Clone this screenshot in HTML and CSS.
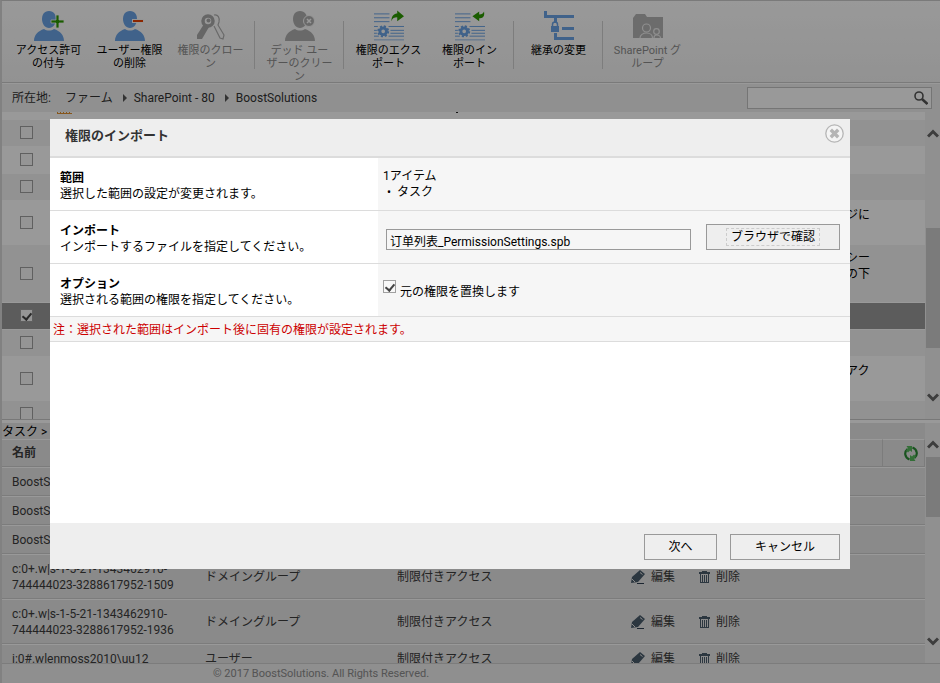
FILE: index.html
```html
<!DOCTYPE html>
<html lang="ja">
<head>
<meta charset="utf-8">
<title>権限のインポート</title>
<link rel="stylesheet" href="styles.css">
</head>
<body>
<svg class="defs" aria-hidden="true">
  <symbol id="user" viewBox="0 0 30 30"><path d="M15 0c5 0 7 4 7 8 0 5-3 9-7 9s-7-4-7-9c0-4 2-8 7-8z"/><path d="M0 30c0-6 4-10 10-12 3 2 7 2 10 0 6 2 10 6 10 12z"/></symbol>
  <symbol id="doc" viewBox="0 0 31 30"><path d="M0 2.500h16M0 6.500h16M0 10.500h16M0 15.500h4M0 19.500h3M0 22.500h3M0 25.500h5M15 15.500h16M17 19.500h14M17 22.500h14M15 25.500h16M0 29.500h31" fill="none" stroke="#6ba4e6"/><circle cx="9.500" cy="20.500" r="3.400" fill="none" stroke="#6ba4e6" stroke-width="3"/><circle cx="9.500" cy="20.500" r="5.200" fill="none" stroke="#6ba4e6" stroke-width="2" stroke-dasharray="2.200 1.884"/></symbol>
  <symbol id="up" viewBox="0 0 12 10"><path d="M1 8.500l5-5 5 5" fill="none" stroke="#666" stroke-width="3"/></symbol>
  <symbol id="edit" viewBox="0 0 14 14"><path d="M9 0l5 4-7 8-7 1 1-6z"/><path d="M1 9l3 3M9 2.500l2.500 2" stroke="#e6e6e6" fill="none"/><path d="M6 13.500h7" stroke="#2e3f50"/></symbol>
  <symbol id="trash" viewBox="0 0 11 12"><path d="M0 1h3V0h5v1h3v2H0zM1 3h1v8h1V4h1v7h1V4h1v7h1V4h1v7h1V3h1v9H1z"/></symbol>
</svg>

<div class="app">
  <nav class="toolbar">
    <button class="tool"><svg viewBox="0 0 30 30"><use href="#user" fill="#6ba4e6"/><path d="M22 4h3v5h5v3h-5v5h-3v-5h-5V9h5z" fill="#2c9a00" stroke="#f9f9f9" stroke-width=".800"/></svg>アクセス許可<br>の付与</button>
    <button class="tool"><svg viewBox="0 0 30 30"><use href="#user" fill="#6ba4e6"/><path d="M17 8h12v4H17z" fill="#f9f9f9"/><path d="M18 9h10v2H18z" fill="#e84000"/></svg>ユーザー権限<br>の削除</button>
    <button class="tool" disabled><svg viewBox="0 0 30 30"><path d="M18 4c4-1 6 3 5 7l-1 3 6 10-1 4-3-1-6-12" fill="none" stroke="#b0b0b0" stroke-width="1.200"/><path d="M8 13l5 3-7 12H1v-4z" fill="#aaa"/><circle cx="12" cy="10" r="5" fill="none" stroke="#aaa" stroke-width="3.500"/><circle cx="12.500" cy="9.500" r="2" fill="#aaa"/></svg>権限のクロー<br>ン</button>
    <span class="sep"></span>
    <button class="tool" disabled><svg viewBox="0 0 30 30"><use href="#user" fill="#b0b0b0"/><circle cx="24" cy="10" r="5.500" fill="#b0b0b0" stroke="#f9f9f9"/><path d="M22 8l4 4m0-4l-4 4" stroke="#fff" stroke-width="1.500"/></svg>デッド ユー<br>ザーのクリー<br>ン</button>
    <span class="sep"></span>
    <button class="tool"><svg viewBox="0 0 31 30"><use href="#doc"/><path d="M18 10c0-6 3-8 6-8V-1l7 6-7 5V6c-3 0-5 1-6 4z" fill="#2c9a00"/></svg>権限のエクス<br>ポート</button>
    <button class="tool"><svg viewBox="0 0 31 30"><use href="#doc"/><path d="M30 0c1 6-2 7-5 7v3l-7-5 7-5v3c3 0 4-1 5-3z" fill="#2c9a00"/></svg>権限のイン<br>ポート</button>
    <span class="sep"></span>
    <button class="tool"><svg viewBox="0 0 30 30"><path d="M1.500 0v5.500H30M11.500 7v5M18 17.500h12M11.500 22v5.500H30" fill="none" stroke="#6ba4e6" stroke-width="3"/><path d="M7 15h8v6H7z" fill="#6ba4e6"/><path d="M8.500 15v-1.500a2.500 2.500 0 0 1 5 0V15" fill="none" stroke="#6ba4e6" stroke-width="1.500"/></svg>継承の変更</button>
    <span class="sep"></span>
    <button class="tool" disabled><svg viewBox="0 0 30 30"><path d="M0 7l3-4h9l2 3h16v21H0z" fill="#b5b5b5"/><g fill="none" stroke="#eee" stroke-width="1.200"><circle cx="13.500" cy="17" r="4"/><path d="M7 27c0-3 3-5 6.500-5s6 2 6 5"/><circle cx="23.500" cy="20.500" r="2.800"/><path d="M21 27c0-2 1-3 2.500-3s4 1 4 3"/></g></svg>SharePoint グ<br>ループ</button>
  </nav>

  <div class="location">
    <span class="where">所在地:</span>
    <a href="#">ファーム</a>
    <svg class="tri" viewBox="0 0 4 8"><path d="M0 0l4 4-4 4z"/></svg>
    <a href="#">SharePoint - 80</a>
    <svg class="tri" viewBox="0 0 4 8"><path d="M0 0l4 4-4 4z"/></svg>
    <a href="#">BoostSolutions</a>
    <label class="search"><input type="search" aria-label="検索"><svg viewBox="0 0 14 14"><circle cx="5" cy="5" r="4" fill="none" stroke="#555" stroke-width="1.600"/><path d="M8 8l5.500 5" stroke="#555" stroke-width="2.600"/></svg></label>
  </div>

  <section class="pane list">
    <div class="view">
      <table class="items">
        <tr class="cut"><td></td><td><svg class="rest" viewBox="0 0 420 2"><path d="M0 1.500h15" stroke="#e09030"/><path d="M0 .500h15" stroke="#e09030" stroke-dasharray="1 2"/><path d="M399 0h2v1h-2z" fill="#222"/></svg></td><td></td></tr>
        <tr class="alt"><td><input type="checkbox" aria-label="項目 1"></td><td></td><td></td></tr>
        <tr><td><input type="checkbox" aria-label="項目 2"></td><td></td><td></td></tr>
        <tr class="alt"><td><input type="checkbox" aria-label="項目 3"></td><td></td><td></td></tr>
        <tr class="mid"><td><input type="checkbox" aria-label="項目 4"></td><td></td><td>ジに<br>&nbsp;</td></tr>
        <tr class="alt tall"><td><input type="checkbox" aria-label="項目 5"></td><td></td><td>シー<br>の下<br>&nbsp;</td></tr>
        <tr class="on"><td><input type="checkbox" aria-label="タスク" checked></td><td></td><td></td></tr>
        <tr class="alt"><td><input type="checkbox" aria-label="項目 7"></td><td></td><td></td></tr>
        <tr class="mid"><td><input type="checkbox" aria-label="項目 8"></td><td></td><td>アク<br>&nbsp;</td></tr>
        <tr class="alt"><td><input type="checkbox" aria-label="項目 9"></td><td></td><td></td></tr>
      </table>
    </div>
    <div class="bar"><svg><use href="#up"/></svg><div class="track"><i class="thumb one"></i></div><svg class="down"><use href="#up"/></svg></div>
  </section>

  <section class="pane rights">
    <div class="view">
      <p class="path">タスク &gt;</p>
      <table class="grid">
        <thead><tr><th class="c1">名前</th><th class="c2"></th><th class="c3"></th><th class="c4"></th><th class="c5"><svg viewBox="0 0 14 15" aria-label="更新"><path d="M5.500 13.500C.5 11.500 0 6 3.500 3M8.500 1.500C13.500 3.500 14 9 10.500 12" fill="none" stroke="#2a8a34" stroke-width="2.200"/><path d="M2.500 0H8v6L6 4.500 4 6.500 2 4.500 3.800 2zM11.500 15H6V9l2 1.500 2-2 2 2-1.800 2.500z" fill="#55b85c"/></svg></th></tr></thead>
        <tbody>
          <tr><td>BoostSolutions</td><td></td><td></td><td></td><td></td></tr>
          <tr><td>BoostSolutions</td><td></td><td></td><td></td><td></td></tr>
          <tr><td>BoostSolutions</td><td></td><td></td><td></td><td></td></tr>
          <tr class="two"><td>c:0+.w|s-1-5-21-1343462910-<br>744444023-3288617952-1509</td><td>ドメイングループ</td><td>制限付きアクセス</td><td><div class="acts"><a href="#"><svg><use href="#edit"/></svg>編集</a><a href="#"><svg class="bin"><use href="#trash"/></svg>削除</a></div></td><td></td></tr>
          <tr class="two"><td>c:0+.w|s-1-5-21-1343462910-<br>744444023-3288617952-1936</td><td>ドメイングループ</td><td>制限付きアクセス</td><td><div class="acts"><a href="#"><svg><use href="#edit"/></svg>編集</a><a href="#"><svg class="bin"><use href="#trash"/></svg>削除</a></div></td><td></td></tr>
          <tr><td>i:0#.wlenmoss2010\uu12</td><td>ユーザー</td><td>制限付きアクセス</td><td><div class="acts"><a href="#"><svg><use href="#edit"/></svg>編集</a><a href="#"><svg class="bin"><use href="#trash"/></svg>削除</a></div></td><td></td></tr>
        </tbody>
      </table>
    </div>
    <div class="bar"><svg><use href="#up"/></svg><div class="track"><i class="thumb two"></i></div><svg class="down"><use href="#up"/></svg></div>
  </section>

  <footer class="foot">© 2017 BoostSolutions. All Rights Reserved.</footer>
</div>

<div class="overlay">
  <form class="dialog" role="dialog" aria-labelledby="title">
    <header class="head">
      <h1 id="title">権限のインポート</h1>
      <button type="button" class="close" aria-label="閉じる"><svg viewBox="0 0 19 19"><circle cx="9.500" cy="9.500" r="8.700" fill="#f4f4f4" stroke="#b5b5b5" stroke-width="1.300"/><path d="M5.800 5.800l7.400 7.400m0-7.400l-7.400 7.400" stroke="#b5b5b5" stroke-width="3.400"/></svg></button>
    </header>
    <div class="row">
      <div class="label"><h2>範囲</h2><p>選択した範囲の設定が変更されます。</p></div>
      <div class="value scope"><div>1アイテム</div><ul><li>タスク</li></ul></div>
    </div>
    <div class="row">
      <div class="label"><h2><label for="file">インポート</label></h2><p>インポートするファイルを指定してください。</p></div>
      <div class="value pick"><input id="file" type="text" value="订单列表_PermissionSettings.spb"><button type="button" class="btn browse"><span>ブラウザで確認</span></button></div>
    </div>
    <div class="row">
      <div class="label"><h2>オプション</h2><p>選択される範囲の権限を指定してください。</p></div>
      <div class="value"><label class="check"><input type="checkbox" checked><span>元の権限を置換します</span></label></div>
    </div>
    <p class="note">注：選択された範囲はインポート後に固有の権限が設定されます。</p>
    <div class="blank"></div>
    <div class="buttons"><button type="button" class="btn next">次へ</button><button type="button" class="btn cancel">キャンセル</button></div>
  </form>
</div>
</body>
</html>
```
FILE: styles.css
```css
* { box-sizing: border-box; }
body {
  margin: 0;
  font: 12px/16px Roboto, "Noto Sans CJK JP", sans-serif;
  color: #000;
}
button, input { font: inherit; color: inherit; }
h1, h2, p, ul { margin: 0; padding: 0; }
a { color: inherit; text-decoration: none; }
.defs { display: none; }

.app {
  display: grid;
  grid-template-rows: auto auto 308fr 243fr auto;
  height: 100vh;
  border-top: 1px solid #ccc;
  border-left: 2px solid #d8d8d8;
  background: #eee;
  overflow: hidden;
}

/* toolbar */
.toolbar {
  display: flex;
  height: 82px;
  padding: 10px 6px 0;
  background: linear-gradient(#fff, #f4f4f4);
  border-bottom: 1px solid #ccc;
}
.tool {
  width: 81px;
  padding: 0;
  border: 0;
  background: none;
  display: block;
  align-self: flex-start;
  font-size: 11px;
  line-height: 13px;
  white-space: nowrap;
}
.tool svg { display: block; width: 30px; height: 30px; margin: 0 auto 3px; overflow: visible; }
.tool:disabled { color: #8c8c8c; }
.sep { width: 1px; height: 48px; margin: 10px 4px 0 3px; background: #d0d0d0; }

.location {
  display: flex;
  align-items: center;
  height: 29px;
  padding: 0 8px 0 10px;
  background: #f0f0f0;
  border-top: 1px solid #fff;
  color: #333;
}
.where { width: 53px; }
.tri { width: 4px; height: 8px; margin: 0 7px 0 10px; fill: #555; }
.search {
  display: flex;
  align-items: center;
  width: 185px;
  height: 22px;
  margin-left: auto;
  padding-right: 3px;
  border: 1px solid #c4c4c4;
  background: #fff;
}
.search input { flex: 1; min-width: 0; border: 0; background: none; outline: 0; }
.search svg { width: 14px; height: 14px; }

/* scrolling panes */
.pane { display: flex; min-height: 0; overflow: hidden; }
.view { flex: 1; min-width: 0; overflow: hidden; }
.bar { width: 15px; display: flex; flex-direction: column; align-items: center; padding: 16px 0; background: #f0f0f0; }
.bar svg { width: 12px; height: 10px; flex: none; }
.bar .down { transform: scaleY(-1); }
.track { flex: 1; align-self: stretch; padding-left: 1px; }
.thumb { display: block; background: #cdcdcd; }
.thumb.one { height: 47%; margin-top: 90px; }
.thumb.two { height: 32%; margin-top: 8px; }

.list { border-bottom: 1px solid #c8c8c8; }
.items { width: 100%; border-collapse: separate; border-spacing: 0; background: #fff; }
.items td { height: 27px; padding: 0; border-top: 1px solid #fff; }
.items td:first-child { width: 55px; padding: 0 0 1px 18px; }
.items td:last-child { width: 79px; }
.items .cut td { height: 7px; border: 0; }
.items .mid td { height: 44px; }
.items .tall td { height: 58px; }
.alt { background: #f3f3f3; }
.on { background: #999; }
.rest { display: block; width: 420px; height: 2px; margin-bottom: 5px; }

input[type="checkbox"] {
  appearance: none;
  display: block;
  flex: none;
  width: 13px;
  height: 13px;
  margin: 0;
  border: 1px solid #a0a0a0;
  background: #f8f8f8;
}
input[type="checkbox"]:checked::after {
  content: "";
  display: block;
  width: 4px;
  height: 7px;
  margin: 1px 0 0 3px;
  border: solid #444;
  border-width: 0 2px 2px 0;
  transform: rotate(40deg);
}

.rights { padding-top: 3px; background: #fff; }
.rights .view { background: #e6e6e6; color: #3c3c3c; }
.path { padding-top: 2px; line-height: 14px; color: #000; }
.grid { width: 100%; table-layout: fixed; border-collapse: separate; border-spacing: 0; }
.grid th { height: 28px; text-align: left; border-top: 1px solid #fff; border-bottom: 1px solid #cfcfcf; padding: 0 0 0 10px; }
.grid td { height: 29px; border-top: 1px solid #fff; border-bottom: 1px solid #cfcfcf; padding: 0 0 0 10px; line-height: 16px; white-space: nowrap; }
.grid .two td { height: 45px; }
.c1 { width: 193px; }
.c2 { width: 192px; }
.c3 { width: 234px; }
.grid .c5 { width: 43px; border-left: 1px solid #cfcfcf; border-right: 1px solid #cfcfcf; padding-left: 21px; }
.c5 svg { display: block; width: 14px; height: 15px; }
.acts { display: flex; gap: 24px; }
.acts a { display: flex; align-items: center; gap: 6px; }
.acts svg { width: 14px; height: 14px; fill: #4a5c6c; }
.acts .bin { width: 11px; height: 12px; }

.foot {
  height: 20px;
  padding-left: 211px;
  border-top: 1px solid #cfcfcf;
  background: #eee;
  color: #8c8c8c;
  font-size: 11px;
  line-height: 20px;
}

/* dialog */
.overlay {
  position: fixed;
  inset: 0;
  display: flex;
  align-items: flex-start;
  padding: 119px 90px 0 50px;
  background: rgba(0, 0, 0, .4);
}
.dialog { flex: 1; min-width: 0; background: #fff; }
.head {
  display: flex;
  justify-content: space-between;
  align-items: flex-start;
  height: 39px;
  padding: 5px 6px 0 15px;
  background: #eee;
  border-bottom: 2px solid #dcdcdc;
}
.head h1 { font-size: 13px; line-height: 24px; color: #333; }
.close { padding: 0; border: 0; background: none; }
.close svg { display: block; width: 19px; height: 19px; }
.row { display: grid; grid-template-columns: 41% 1fr; border-bottom: 1px solid #dcdcdc; }
.label { padding: 12px 10px 8px; }
.label h2 { font-size: 12px; line-height: 16px; }
.value { display: flex; align-items: center; background: #f6f6f6; padding: 0 10px 0 5px; }
.scope { display: block; padding-top: 10px; }
.scope ul { list-style: none; }
.scope li { display: flex; gap: 6px; }
.scope li::before { content: "•"; width: 8px; text-align: right; }
.pick { gap: 15px; padding-left: 8px; }
.pick input { flex: 1; min-width: 0; height: 21px; margin-top: 4px; padding: 3px 3px 0; border: 1px solid #999; background: #f6f6f6; font-family: Roboto, "Noto Sans CJK SC", sans-serif; }
.btn { height: 26px; padding: 0; border: 1px solid #999; background: #eee; line-height: 16px; }
.browse { width: 134px; }
.browse span { display: inline-block; padding: 0 4px; outline: 1px dashed #ccc; }
.check { display: flex; gap: 4px; }
.check span { padding-top: 4px; }
.note { padding: 5px 3px 3px; background: #f6f6f6; border-bottom: 1px solid #dcdcdc; color: #c00; }
.blank { height: 181px; }
.buttons { display: flex; justify-content: flex-end; gap: 13px; padding: 11px 10px 9px; background: #eee; }
.next { width: 73px; }
.cancel { width: 110px; }
```
